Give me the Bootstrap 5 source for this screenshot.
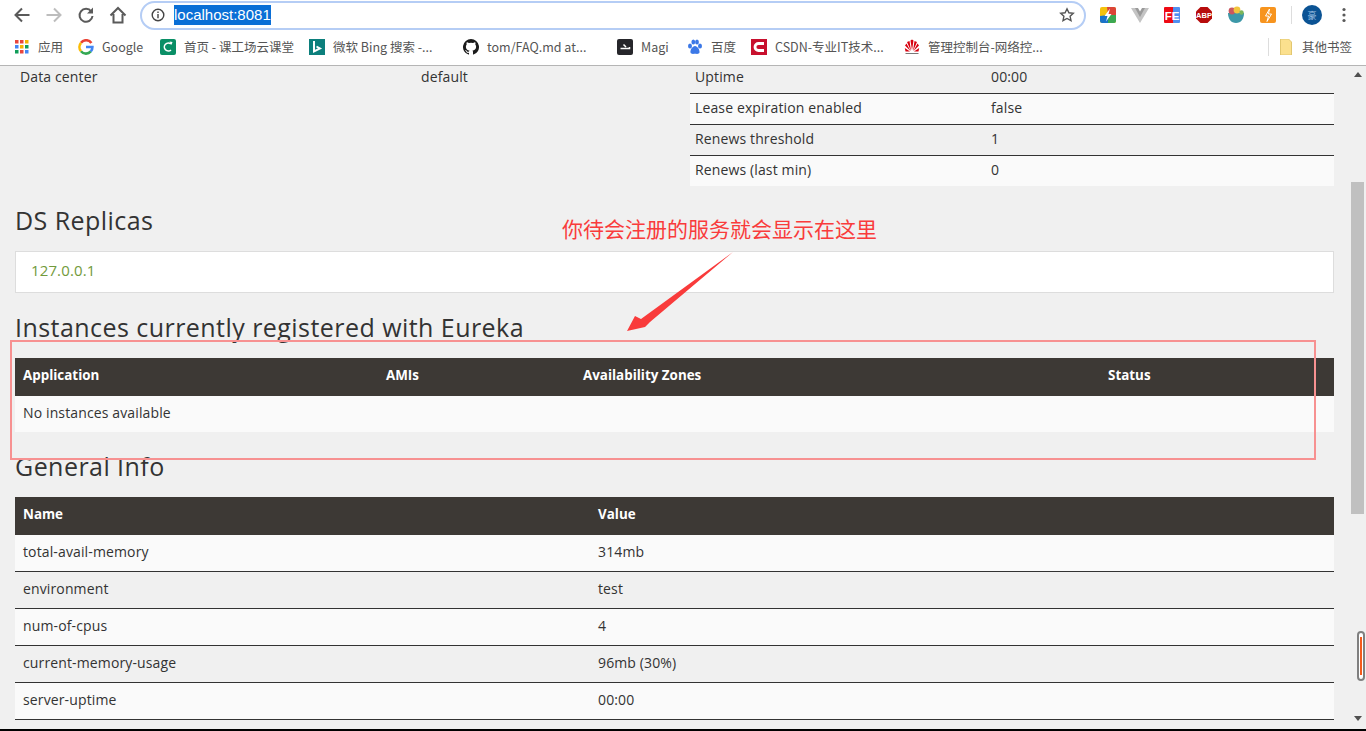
<!DOCTYPE html>
<html lang="en">
<head>
    <meta charset="UTF-8">
    <title>Eureka</title>
    <link href="https://cdn.jsdelivr.net/npm/bootstrap@5.3.0/dist/css/bootstrap.min.css" rel="stylesheet">
    <style>
        html, body { height: 100%; overflow: hidden; }
        body { background: #f0f0f0; color: #333; font-family: "Open Sans", "Noto Sans CJK SC", sans-serif; font-size: 14px; letter-spacing: .13px; position: relative; }
        .chrome-top { height: 30px; background: #fff; padding-left: 13px; letter-spacing: 0; }
        .tool-btn { width: 18px; height: 18px; display: block; flex: none; }
        .tool-gap { margin-left: 14px; }
        .url-box { width: 946px; height: 29px; border: 2px solid #b5cdf5; border-radius: 15px; background: #fff; margin-left: 13px; padding: 0 9px; }
        .url-text { background: #0a6fd6; color: #fff; font: 15px/20px "Liberation Sans", sans-serif; margin-left: 9px; }
        .ext-row { gap: 14px; margin-left: 13px; }
        .ext-ico { width: 18px; height: 18px; display: block; flex: none; }
        .ext-sep { width: 1px; height: 18px; background: #ddd; margin-right: -4px; }
        .ext-avatar { width: 20px; height: 20px; display: block; flex: none; }
        .ext-dots { width: 4px; height: 18px; display: block; flex: none; margin-left: 6px; }
        .bookmarks { height: 36px; background: #fff; border-bottom: 1px solid #b5b5b5; font: 12.5px/16px "Noto Sans CJK SC", "Liberation Sans", sans-serif; color: #555; padding: 0 14px 1px 14px; letter-spacing: 0; }
        .bm-item { white-space: nowrap; flex: none; display: flex; align-items: center; }
        .bm-item svg { width: 16px; height: 16px; display: block; margin-right: 8px; flex: none; }
        .bm-w64 { width: 64px; } .bm-w70 { width: 70px; } .bm-w82 { width: 82px; } .bm-w149 { width: 149px; } .bm-w153 { width: 153px; } .bm-w154 { width: 154px; }
        .bm-sep { width: 1px; height: 18px; background: #ddd; margin-right: 9px; }
        .page-wrap { height: 663px; overflow: hidden; }
        .page-body { width: 1350px; flex: none; padding: 0 16px 0 15px; overflow: hidden; }
        .side-scroll { width: 16px; background: #f0f0f0; position: relative; flex: none; }
        .scroll-up { position: absolute; top: 6px; left: 4px; width: 0; height: 0; border-left: 4px solid transparent; border-right: 4px solid transparent; border-bottom: 5px solid #505050; }
        .scroll-down { position: absolute; bottom: 8px; left: 4px; width: 0; height: 0; border-left: 4px solid transparent; border-right: 4px solid transparent; border-top: 5px solid #505050; }
        .scroll-thumb { position: absolute; left: 1px; top: 116px; width: 13px; height: 332px; background: #c0c0c0; }
        .scroll-mark { position: absolute; left: 7px; top: 565px; width: 8px; height: 50px; border: 2px solid #808080; border-radius: 4px; background: #fff; padding: 4px 1px; }
        .scroll-mark i { display: block; height: 100%; background: #f45a1c; }
        .bottom-strip { height: 2px; background: #000; }
        .info-top { gap: 15px; height: 120px; }
        .info-left { width: 660px; flex: none; }
        .info-left .pair { padding: 3px 5px 0 5px; line-height: 16px; height: 23px; }
        .info-left .pair span:first-child { width: 401px; display: inline-block; }
        .eu-table { width: 100%; margin: 0; border-collapse: collapse; }
        .eu-table td { padding: 0 5px 2px; height: 31px; border-top: 1px solid #333; vertical-align: middle; }
        .eu-table tr:first-child td { border-top: 0; height: 27px; padding-bottom: 5px; }
        .eu-table tr:nth-child(even) td { background: #fafafa; }
        .eu-table td:first-child { width: 296px; }
        h2.sec-title { font-size: 25px; line-height: 28px; font-weight: 500; margin: 20px 0 17px 0; color: #333; letter-spacing: .45px; }
        .replica-box { height: 42px; background: #fff; border: 1px solid #ddd; padding: 0 15px; line-height: 36px; color: #729a3c; font-size: 15px; }
        .data-table { width: 100%; margin: 0; border-collapse: separate; border-spacing: 0; }
        .data-table th { background: #3d3935; color: #fff; font-weight: 700; font-size: 13.4px; letter-spacing: 0; height: 38px; padding: 0 8px 3px; vertical-align: middle; }
        .data-table td { height: 37px; padding: 0 8px 4px; border-bottom: 1px solid #333; vertical-align: middle; }
        .data-table tr:nth-child(even) td { background: #fafafa; }
        .data-table.no-line td { border-bottom: 0; height: 36px; }
        .col-app { width: 363px; } .col-ami { width: 197px; } .col-zone { width: 525px; }
        .col-name { width: 575px; }
        .note-text { position: absolute; left: 562px; top: 214px; color: #f93b3b; font: 21px/28px "Noto Sans CJK SC", sans-serif; white-space: nowrap; letter-spacing: 0; }
        .note-arrow { position: absolute; left: 620px; top: 245px; width: 120px; height: 90px; }
        .note-box { position: absolute; left: 10px; top: 340px; width: 1306px; height: 120px; border: 2px solid #f79191; }
    </style>
</head>
<body>
    <div class="chrome-top d-flex align-items-center">
        <svg class="tool-btn" viewBox="0 0 18 18" fill="none" stroke="#5a5a5a" stroke-width="2"><path d="M16.500 9H2.500M9 2.500L2.500 9 9 15.500"/></svg>
        <svg class="tool-btn tool-gap" viewBox="0 0 18 18" fill="none" stroke="#bdbdbd" stroke-width="2"><path d="M1.500 9h14M9 2.500L15.500 9 9 15.500"/></svg>
        <svg class="tool-btn tool-gap" viewBox="0 0 18 18" fill="none" stroke="#5a5a5a" stroke-width="2"><path d="M14.300 5.500A6.500 6.500 0 1 0 15.500 10"/><path d="M16 1.500v6h-6z" fill="#5a5a5a" stroke="none"/></svg>
        <svg class="tool-btn tool-gap" viewBox="0 0 18 18" fill="none" stroke="#5a5a5a" stroke-width="2"><path d="M1.500 9.500L9 2l7.500 7.500M4.500 8v8.500h9V8"/></svg>
        <div class="url-box d-flex align-items-center">
            <svg width="14" height="14" viewBox="0 0 14 14" fill="none" stroke="#444" stroke-width="1.400"><circle cx="7" cy="7" r="5.800"/><path d="M7 6v4.200M7 3.400v1.500"/></svg>
            <span class="url-text">localhost:8081</span>
            <svg class="ms-auto" width="16" height="16" viewBox="0 0 16 16" fill="none" stroke="#555" stroke-width="1.400"><path d="M8 1.800l1.900 4 4.400.5-3.200 3 .9 4.400L8 11.500l-4 2.200.9-4.400-3.200-3 4.400-.5z"/></svg>
        </div>
        <div class="ext-row d-flex align-items-center">
            <svg class="ext-ico" viewBox="0 0 18 18"><rect x="1" y="1" width="16" height="16" rx="2" fill="#f4c20d"/><path d="M8 1h7a2 2 0 0 1 2 2v6H9z" fill="#db4437"/><path d="M1 10v5a2 2 0 0 0 2 2h6v-8z" fill="#1a73c9"/><path d="M17 9v6a2 2 0 0 1-2 2H9V9z" fill="#3ba852"/><path d="M11 2.500L5.500 10h3L7 15.500 12.500 8h-3z" fill="#fff"/></svg>
            <svg class="ext-ico" viewBox="0 0 18 18"><path d="M0 2h18L9 17z" fill="#c4c4c4"/><path d="M4 2h10L9 11z" fill="#9a9a9a"/><path d="M7 2h4L9 5.500z" fill="#fff"/></svg>
            <svg class="ext-ico" viewBox="0 0 18 18"><rect x="1" y="1" width="10" height="16" rx="1" fill="#ee0a14"/><rect x="10" y="1" width="7" height="16" rx="1" fill="#4f8ff0"/><text x="9" y="13.500" text-anchor="middle" font-size="11.500" font-weight="700" fill="#fff" font-family="Liberation Sans">FE</text></svg>
            <svg class="ext-ico" viewBox="0 0 18 18"><path d="M5.500 1h7L17 5.500v7L12.500 17h-7L1 12.500v-7z" fill="#b70c0c"/><text x="9" y="11.800" text-anchor="middle" font-size="7.500" font-weight="700" fill="#fff" font-family="Liberation Sans">ABP</text></svg>
            <svg class="ext-ico" viewBox="0 0 18 18"><path d="M1 7h16c0 6-3 10-8 10S1 13 1 7z" fill="#3d98a8"/><circle cx="5" cy="5" r="3.400" fill="#c9575f"/><circle cx="10" cy="4" r="3.400" fill="#f2c53d"/><circle cx="14.500" cy="6.500" r="2.200" fill="#7cb65a"/></svg>
            <svg class="ext-ico" viewBox="0 0 18 18"><rect x="1" y="1" width="16" height="16" rx="2" fill="#f7941e"/><path d="M10.500 3L6.500 10h3L8 15.500l4.500-7.500h-3z" fill="none" stroke="#fff" stroke-width="1"/></svg>
            <span class="d-block ext-sep"></span>
            <svg class="ext-avatar" viewBox="0 0 20 20"><circle cx="10" cy="10" r="10" fill="#0b5394"/><text x="10" y="13.500" text-anchor="middle" font-size="9" fill="#9fc0e2" font-family="Noto Sans CJK SC">豪</text></svg>
            <svg class="ext-dots" viewBox="0 0 4 18" fill="#5a5a5a"><circle cx="2" cy="3.500" r="1.600"/><circle cx="2" cy="9" r="1.600"/><circle cx="2" cy="14.500" r="1.600"/></svg>
        </div>
    </div>
    <div class="bookmarks d-flex align-items-center">
        <span class="bm-item bm-w64"><svg viewBox="0 0 16 16"><g fill="#e8453c"><rect x="1" y="1" width="3.500" height="3.500"/><rect x="6" y="1" width="3.500" height="3.500"/></g><rect x="11" y="1" width="3.500" height="3.500" fill="#f4b400"/><rect x="1" y="6" width="3.500" height="3.500" fill="#4285f4"/><rect x="6" y="6" width="3.500" height="3.500" fill="#f4b400"/><rect x="11" y="6" width="3.500" height="3.500" fill="#0f9d58"/><rect x="1" y="11" width="3.500" height="3.500" fill="#0f9d58"/><rect x="6" y="11" width="3.500" height="3.500" fill="#e8453c"/><rect x="11" y="11" width="3.500" height="3.500" fill="#4285f4"/></svg>应用</span>
        <span class="bm-item bm-w82"><svg viewBox="0 0 16 16" fill="none" stroke-width="2.600"><path d="M13.400 4A6.400 6.400 0 0 0 3 3.800" stroke="#ea4335"/><path d="M3 3.800a6.400 6.400 0 0 0 0 8.400" stroke="#fbbc05"/><path d="M3 12.200a6.400 6.400 0 0 0 9.800.2" stroke="#34a853"/><path d="M12.800 12.400A6.400 6.400 0 0 0 14.400 8H8" stroke="#4285f4"/></svg>Google</span>
        <span class="bm-item bm-w149"><svg viewBox="0 0 16 16"><rect x="0" y="0" width="16" height="16" rx="2" fill="#0a8f66"/><path d="M11 5A4 4 0 1 0 11 11" fill="none" stroke="#fff" stroke-width="1.600"/><path d="M9.500 2.500l3 .5-1 3z" fill="#fff"/></svg>首页 - 课工场云课堂</span>
        <span class="bm-item bm-w154"><svg viewBox="0 0 16 16"><rect width="16" height="16" fill="#0c7f7c"/><path d="M5 2v10.500l6-3L7.500 7.500" fill="none" stroke="#fff" stroke-width="2"/></svg>微软 Bing 搜索 -...</span>
        <span class="bm-item bm-w154"><svg viewBox="0 0 16 16" fill="#1b1b1b"><path d="M8 0a8 8 0 0 0-2.500 15.600c.4.1.5-.2.5-.4v-1.400c-2.200.5-2.700-1-2.700-1-.4-.9-.9-1.200-.9-1.200-.7-.5.100-.5.100-.5.800.1 1.200.8 1.200.8.700 1.200 1.900.9 2.300.7.100-.5.300-.9.500-1.100-1.800-.2-3.600-.9-3.600-4 0-.9.300-1.600.800-2.100-.1-.2-.4-1 .1-2.100 0 0 .700-.2 2.200.8a7.600 7.600 0 0 1 4 0c1.500-1 2.200-.8 2.200-.8.500 1.100.2 1.900.1 2.100.5.500.8 1.200.8 2.100 0 3.100-1.900 3.800-3.700 4 .3.300.6.800.6 1.500v2.200c0 .2.100.5.500.4A8 8 0 0 0 8 0z"/></svg>tom/FAQ.md at...</span>
        <span class="bm-item bm-w70"><svg viewBox="0 0 16 16"><rect width="16" height="16" rx="2" fill="#26262b"/><path d="M3.500 9.500h9V8M6.500 5.500l2.500 2.500" fill="none" stroke="#fff" stroke-width="1.500"/></svg>Magi</span>
        <span class="bm-item bm-w64"><svg viewBox="0 0 16 16" fill="#3b78e7"><ellipse cx="3" cy="7" rx="2" ry="2.500"/><ellipse cx="6.300" cy="3" rx="1.900" ry="2.600"/><ellipse cx="10" cy="3" rx="1.900" ry="2.600"/><ellipse cx="13" cy="7" rx="2" ry="2.500"/><path d="M8 7c-2.500 0-5 4-4.500 6.500.4 1.800 3 1.400 4.500 1.200 1.500.2 4.100.6 4.500-1.200C13 11 10.500 7 8 7z"/></svg>百度</span>
        <span class="bm-item bm-w153"><svg viewBox="0 0 16 16"><rect width="16" height="16" fill="#c8102e"/><path d="M13 4.500H7.500a3.500 3.500 0 0 0 0 7H13" fill="none" stroke="#fff" stroke-width="2.800"/></svg>CSDN-专业IT技术...</span>
        <span class="bm-item"><svg viewBox="0 0 16 16" fill="#d7000f"><path d="M8 11.500L6.500 1.500 8 .5zM8 11.500l1.500-10L8 .5zM7 12L3 3l2.500-1zM9 12l4-9-2.500-1zM6.500 12L1 6.500l1.500-2zM9.500 12L15 6.500l-1.500-2zM6 12.500H1.500L.8 9zM10 12.500h4.500l.7-3.500z"/><rect x="1.500" y="14" width="13" height="1" fill="#777"/></svg>管理控制台-网络控...</span>
        <span class="bm-item ms-auto"><span class="d-block bm-sep"></span><svg viewBox="0 0 16 16"><path d="M2.500 0h8l3 3v13h-11z" fill="#fbe08e" stroke="#e2c770"/></svg>其他书签</span>
    </div>
    <div class="page-wrap d-flex">
        <div class="page-body">
            <div class="info-top d-flex">
                <div class="info-left">
                    <div class="pair"><span>Data center</span><span>default</span></div>
                </div>
                <div class="flex-grow-1">
                    <table class="eu-table">
                        <tr><td>Uptime</td><td>00:00</td></tr>
                        <tr><td>Lease expiration enabled</td><td>false</td></tr>
                        <tr><td>Renews threshold</td><td>1</td></tr>
                        <tr><td>Renews (last min)</td><td>0</td></tr>
                    </table>
                </div>
            </div>
            <h2 class="sec-title">DS Replicas</h2>
            <div class="replica-box">127.0.0.1</div>
            <h2 class="sec-title">Instances currently registered with Eureka</h2>
            <table class="data-table no-line">
                <tr><th class="col-app">Application</th><th class="col-ami">AMIs</th><th class="col-zone">Availability Zones</th><th>Status</th></tr>
                <tr><td colspan="4">No instances available</td></tr>
            </table>
            <h2 class="sec-title">General Info</h2>
            <table class="data-table">
                <tr><th class="col-name">Name</th><th>Value</th></tr>
                <tr><td>total-avail-memory</td><td>314mb</td></tr>
                <tr><td>environment</td><td>test</td></tr>
                <tr><td>num-of-cpus</td><td>4</td></tr>
                <tr><td>current-memory-usage</td><td>96mb (30%)</td></tr>
                <tr><td>server-uptime</td><td>00:00</td></tr>
            </table>
        </div>
        <div class="side-scroll">
            <span class="scroll-up"></span>
            <span class="scroll-thumb"></span>
            <span class="scroll-mark"><i></i></span>
            <span class="scroll-down"></span>
        </div>
    </div>
    <div class="bottom-strip"></div>

    <span class="note-text">你待会注册的服务就会显示在这里</span>
    <svg class="note-arrow" viewBox="0 0 120 90"><path d="M113 7L30 77 25 82 7 86 15 71 21 74z" fill="#f93b3b"/></svg>
    <div class="note-box"></div>

    <script src="https://cdn.jsdelivr.net/npm/bootstrap@5.3.0/dist/js/bootstrap.bundle.min.js"></script>
</body>
</html>
